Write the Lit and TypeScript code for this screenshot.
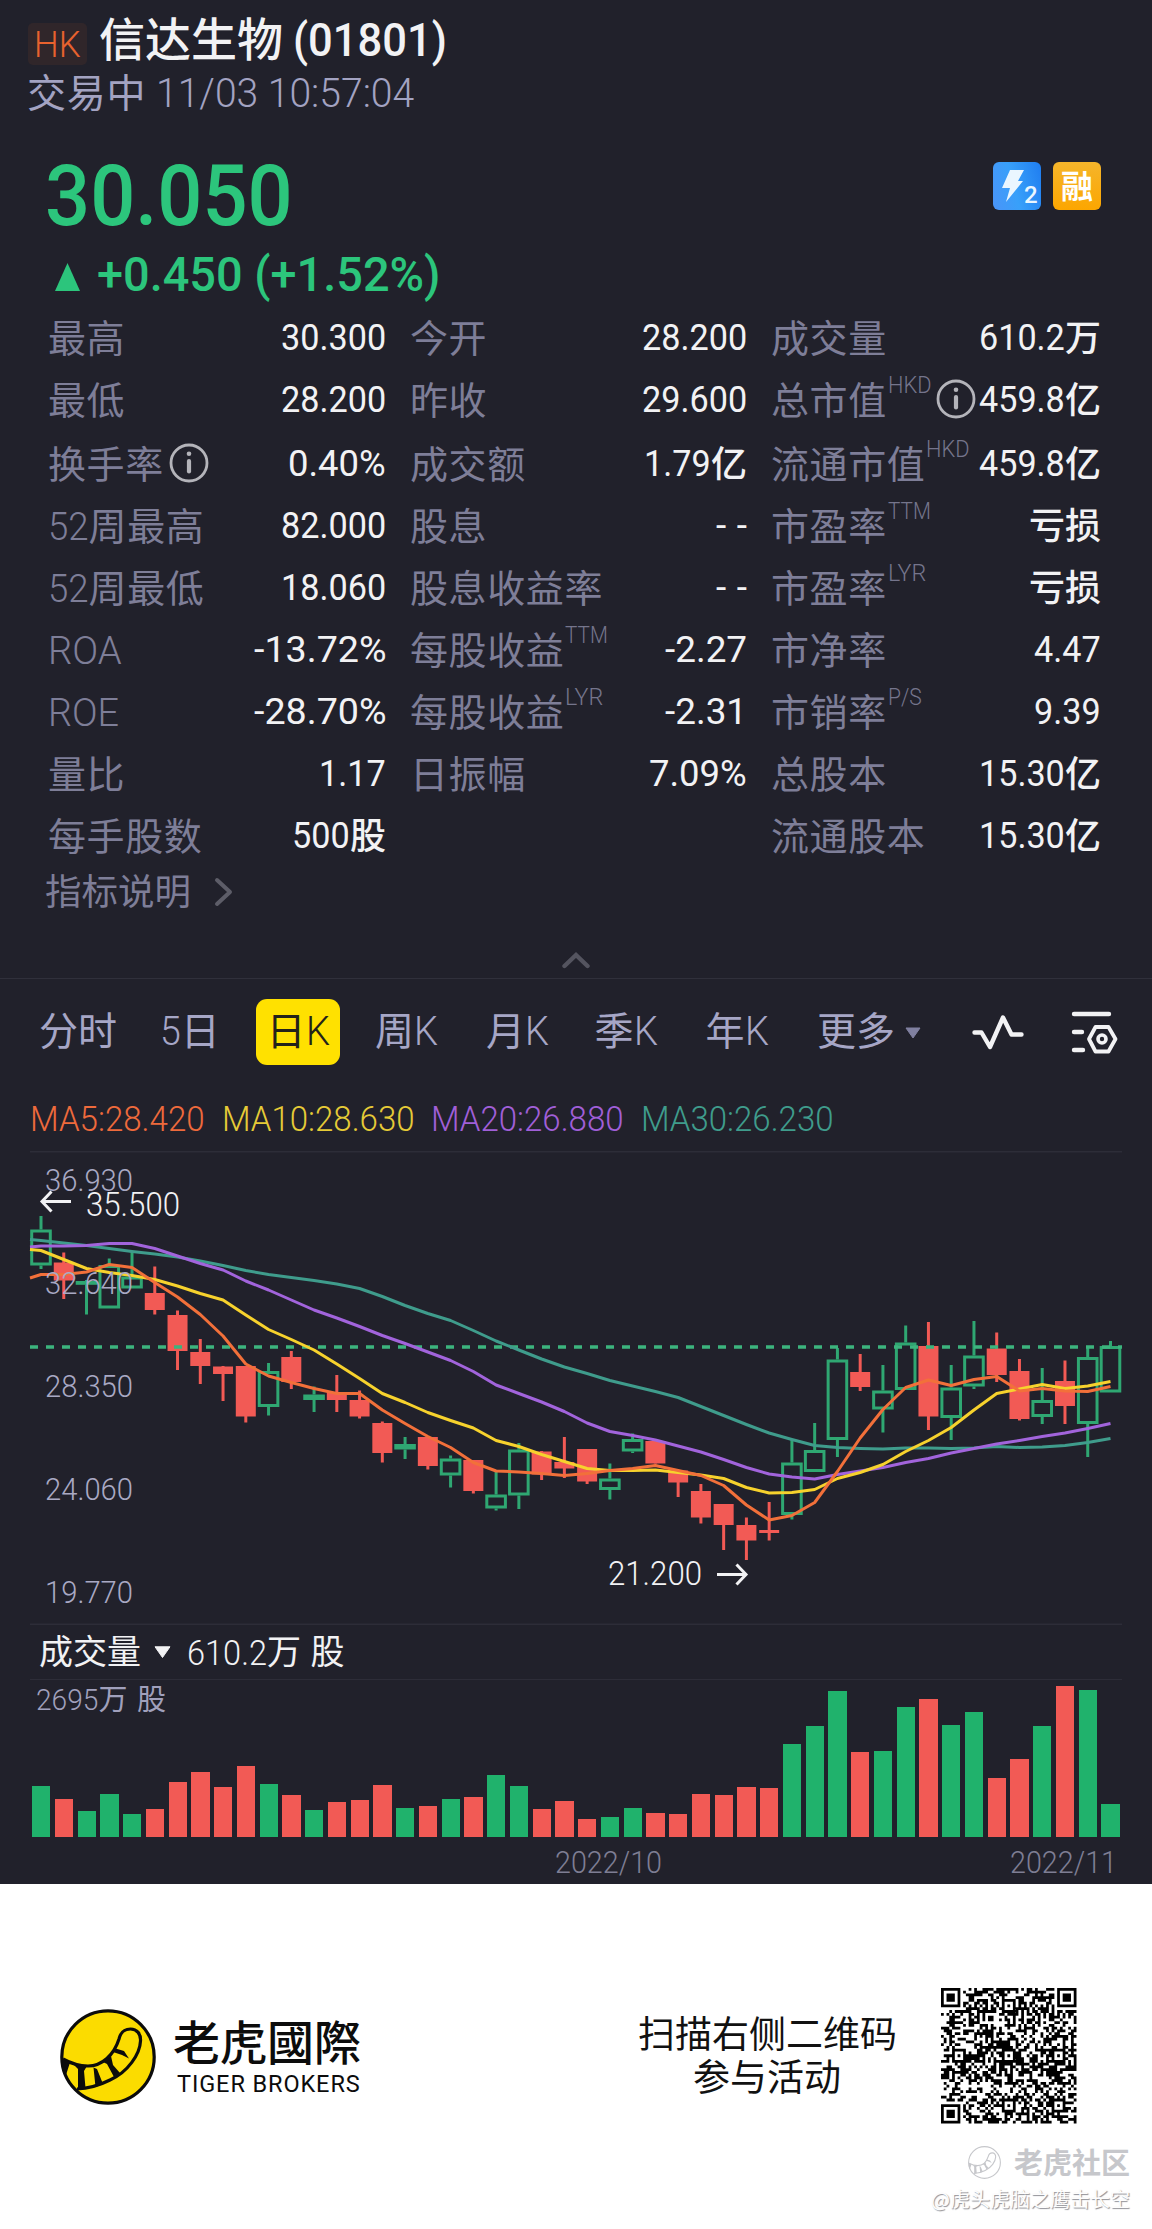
import { LitElement, html, svg, css, nothing } from 'lit';
import { customElement } from 'lit/decorators.js';

type Cell = { label: string; value: string; sup?: string; info?: boolean };

const ROWS: (Cell | null)[][] = [
  [{ label: '最高', value: '30.300' }, { label: '今开', value: '28.200' }, { label: '成交量', value: '610.2万' }],
  [{ label: '最低', value: '28.200' }, { label: '昨收', value: '29.600' }, { label: '总市值', sup: 'HKD', info: true, value: '459.8亿' }],
  [{ label: '换手率', info: true, value: '0.40%' }, { label: '成交额', value: '1.79亿' }, { label: '流通市值', sup: 'HKD', value: '459.8亿' }],
  [{ label: '52周最高', value: '82.000' }, { label: '股息', value: '--' }, { label: '市盈率', sup: 'TTM', value: '亏损' }],
  [{ label: '52周最低', value: '18.060' }, { label: '股息收益率', value: '--' }, { label: '市盈率', sup: 'LYR', value: '亏损' }],
  [{ label: 'ROA', value: '-13.72%' }, { label: '每股收益', sup: 'TTM', value: '-2.27' }, { label: '市净率', value: '4.47' }],
  [{ label: 'ROE', value: '-28.70%' }, { label: '每股收益', sup: 'LYR', value: '-2.31' }, { label: '市销率', sup: 'P/S', value: '9.39' }],
  [{ label: '量比', value: '1.17' }, { label: '日振幅', value: '7.09%' }, { label: '总股本', value: '15.30亿' }],
  [{ label: '每手股数', value: '500股' }, null, { label: '流通股本', value: '15.30亿' }],
];

// high, body top, body bottom, low (chart units), 1 = up
const CANDLES: number[][] = [
  [1216, 1229.5, 1265.5, 1269, 1], [1252.5, 1262.5, 1280.5, 1299, 0], [1280, 1281, 1284.5, 1314.5, 1],
  [1258.5, 1265, 1308.5, 1308.5, 1], [1251.5, 1276.5, 1288.5, 1288.5, 1], [1266.5, 1293, 1310, 1314.5, 0],
  [1310.5, 1315, 1351, 1370, 0], [1339, 1352, 1366, 1384, 0], [1366, 1366.5, 1374, 1401, 0],
  [1366, 1366, 1416.5, 1422.5, 0], [1363, 1371, 1407, 1415.5, 1], [1351, 1357, 1382, 1389, 0],
  [1386.5, 1394.5, 1400, 1412, 1], [1375, 1392.5, 1400, 1412, 0], [1390.5, 1400, 1416.5, 1418.5, 0],
  [1421.5, 1423, 1453, 1462.5, 0], [1437, 1444, 1449.5, 1459, 1], [1437, 1437, 1466, 1469.5, 0],
  [1455.5, 1458.5, 1475.5, 1487.5, 1], [1460, 1460, 1491, 1493.5, 0], [1471.5, 1494.5, 1508.5, 1510.5, 1],
  [1443, 1449.5, 1495.5, 1509, 1], [1451, 1451.5, 1474.5, 1480, 0], [1437, 1462, 1468.5, 1478, 0],
  [1449, 1449, 1481.5, 1484, 0], [1463.5, 1478.5, 1490, 1499.5, 1], [1433.5, 1439, 1451.5, 1453, 1],
  [1440, 1441, 1463.5, 1463.5, 0], [1470.5, 1470.5, 1482.5, 1497, 0], [1484, 1491, 1517.5, 1523.5, 0],
  [1504, 1504, 1525, 1550, 0], [1517.5, 1525, 1540.5, 1560, 0], [1502, 1530, 1533, 1540.5, 0],
  [1439.5, 1462.5, 1515, 1519.5, 1], [1423, 1450, 1472, 1472, 1], [1348, 1359.5, 1440, 1457, 1],
  [1354, 1372, 1387, 1391, 0], [1365, 1390.5, 1409.5, 1432.5, 1], [1325.5, 1342.5, 1390, 1390, 1],
  [1322, 1346, 1416.5, 1430, 0], [1365, 1387.5, 1418, 1440, 1], [1321, 1355.5, 1386.5, 1389, 1],
  [1332.5, 1348.5, 1375, 1382, 0], [1359, 1371, 1419, 1420.5, 0], [1368, 1400, 1417, 1424, 1],
  [1360.5, 1381, 1406, 1424, 0], [1348, 1357, 1424, 1457, 1], [1341, 1346, 1392.5, 1392.5, 1],
];

// the first value of each line sits on the left edge of the plot
const MA: { name: string; value: string; cls: string; points: number[] }[] = [
  {
    name: 'MA5', value: '28.420', cls: 'ma5',
    points: [1278, 1274.5, 1274.5, 1272, 1264.5, 1267.5, 1282.5, 1297, 1314.5, 1336, 1364, 1376, 1382.5, 1388.5, 1393.5, 1393.5, 1410, 1423.5, 1436.5, 1447.5, 1462.5, 1471, 1472, 1473.5, 1475.5, 1473.5, 1470.5, 1468.5, 1465.5, 1470.5, 1475.5, 1485.5, 1505, 1520, 1515.5, 1502.5, 1471.5, 1438, 1409.5, 1387.5, 1380, 1385.5, 1379.5, 1376.5, 1391, 1388.5, 1391, 1391.5, 1386.5],
  },
  {
    name: 'MA10', value: '28.630', cls: 'ma10',
    points: [1249.5, 1250.5, 1259.5, 1268.5, 1272.5, 1275.5, 1279.5, 1286, 1293.5, 1300, 1315, 1329.5, 1339.5, 1350, 1364, 1378.5, 1393.5, 1402.5, 1412.5, 1420.5, 1428, 1440.5, 1446.5, 1454.5, 1461.5, 1468.5, 1470.5, 1470.5, 1470, 1472.5, 1475, 1478.5, 1487.5, 1493, 1492.5, 1489.5, 1478.5, 1472.5, 1464.5, 1451.5, 1440.5, 1427.5, 1410, 1393.5, 1389, 1384.5, 1388.5, 1386, 1381.5],
  },
  {
    name: 'MA20', value: '26.880', cls: 'ma20',
    points: [1247, 1246, 1246, 1245.5, 1243.5, 1243.5, 1248.5, 1256, 1263.5, 1270, 1281, 1290, 1300, 1310, 1318, 1326.5, 1335.5, 1343.5, 1352, 1360.5, 1371.5, 1385, 1393.5, 1402, 1411.5, 1423, 1431.5, 1435.5, 1440, 1446, 1452, 1459.5, 1467.5, 1474, 1477, 1479, 1474.5, 1471, 1467.5, 1462.5, 1458.5, 1453, 1448.5, 1444, 1440.5, 1436.5, 1433, 1428.5, 1423.5],
  },
  {
    name: 'MA30', value: '26.230', cls: 'ma30',
    points: [1239.5, 1240.5, 1243, 1245.5, 1248.5, 1251.5, 1254, 1257, 1261, 1265.5, 1270.5, 1274.5, 1277.5, 1280.5, 1284, 1288.5, 1296.5, 1305.5, 1313.5, 1320.5, 1330.5, 1341, 1350, 1359, 1367, 1373.5, 1380.5, 1386, 1391.5, 1397.5, 1406.5, 1415.5, 1424.5, 1433, 1439.5, 1445.5, 1447.5, 1448.5, 1449, 1448, 1448, 1448.5, 1448, 1446.5, 1447.5, 1447, 1445.5, 1442.5, 1438.5],
  },
];

const VOLUME = [
  152, 113, 79, 128, 70, 83, 164, 196, 150, 212, 158, 127, 81, 106, 110, 155, 88, 92, 113, 119, 185, 153, 83, 109,
  53, 59, 86, 72, 70, 128, 125, 151, 148, 280, 332, 438, 254, 259, 389, 415, 337, 376, 178, 234, 332, 452, 442, 100,
];

const cx = (i: number) => 41 + i * 22.755;

// advance widths (em) of the condensed latin face, digits are 0.52
const ADVANCE: Record<string, number> = {
  '.': 0.24, ':': 0.27, ' ': 0.29, '-': 0.42, '+': 0.54, '%': 0.84, '/': 0.33, '(': 0.34, ')': 0.34,
  M: 0.8, A: 0.63, H: 0.66, K: 0.6, D: 0.63, T: 0.53, R: 0.6, O: 0.66, E: 0.56, L: 0.51, Y: 0.55, P: 0.58, S: 0.56,
};

// A condensed latin run. The svg is exactly one cap height tall, so it stands on the text baseline.
function num(text: string, size: number, scale = 1) {
  const width = [...text].reduce((w, ch) => w + (ADVANCE[ch] ?? 0.52) * size * scale, 0).toFixed(1);
  const height = (size * 0.711).toFixed(1);
  const adjust = text === '--' ? 'spacing' : 'spacingAndGlyphs';
  return html`<svg class="num" width=${width} height=${height} font-size=${size}><text y=${height} textLength=${width} lengthAdjust=${adjust}>${text}</text></svg>`;
}

// Splits a string in latin and Chinese runs
function mixed(text: string, size: number, scale = 1) {
  const runs = text.match(/[\x21-\x7e]+|[^\x21-\x7e]+/g) ?? [];
  return runs.map((r) => (/[\x21-\x7e]/.test(r) ? num(r, size, scale) : r));
}

const numStyles = css`
  .num {
    display: inline-block;
    flex: none;
    overflow: visible;
    fill: currentColor;
    font-family: Roboto, sans-serif;
    letter-spacing: 0;
    word-spacing: 0;
    white-space: pre;
  }
`;

const ALIGN = [6, 24, 42];
const QR_SIZE = 49;

function qrModule(x: number, y: number, seed: number): boolean {
  for (const [fx, fy] of [[3, 3], [45, 3], [3, 45]]) {
    const d = Math.max(Math.abs(x - fx), Math.abs(y - fy));
    if (d <= 4) return d !== 2 && d !== 4;
  }
  for (const ax of ALIGN) {
    for (const ay of ALIGN) {
      if ((ax === 6 && ay !== 24) || (ay === 6 && ax !== 24)) continue;
      const d = Math.max(Math.abs(x - ax), Math.abs(y - ay));
      if (d <= 2) return d !== 1;
    }
  }
  if (x === 6 || y === 6) return (x + y) % 2 === 0;
  return seed > 0.49;
}

function qrPath(): string {
  let d = '';
  let s = 1801;
  for (let y = 0; y < QR_SIZE; y++) {
    for (let x = 0; x < QR_SIZE; x++) {
      s = (s * 16807) % 2147483647;
      if (qrModule(x, y, s / 2147483647)) d += `M${x} ${y}h1v1h-1z`;
    }
  }
  return d;
}

@customElement('info-icon')
export class InfoIcon extends LitElement {
  static styles = css`
    :host {
      display: block;
      flex: none;
      width: 40px;
      height: 40px;
    }
    svg {
      display: block;
    }
  `;

  render() {
    return html`
      <svg width="40" height="40" viewBox="0 0 40 40" fill="none" stroke="#b4b4ba">
        <circle cx="20" cy="20" r="18" stroke-width="2.8" />
        <circle cx="20" cy="10.8" r="2.3" fill="#b4b4ba" stroke="none" />
        <path d="M20 18V28.500" stroke-width="4.2" stroke-linecap="round" />
      </svg>
    `;
  }
}

@customElement('quote-stats')
export class QuoteStats extends LitElement {
  static styles = [
    numStyles,
    css`
      :host {
        display: block;
        padding: 0 51px 0 48px;
      }
      .row {
        display: grid;
        grid-template-columns: 338px 337px 330px;
        column-gap: 24px;
        height: 62px;
      }
      .row:nth-child(3) {
        padding-top: 2px;
      }
      .cell {
        display: flex;
        align-items: center;
        height: 62px;
        line-height: 61px;
        white-space: nowrap;
      }
      .label {
        font-size: 38px;
        letter-spacing: 0.6px;
        color: #7e7e98;
      }
      .label .num {
        font-weight: 300;
      }
      .sup {
        display: flex;
        color: #75758c;
        margin: -23px 0 0 1px;
        font-weight: 300;
      }
      .value {
        font-size: 36px;
        color: #f2f2f4;
        margin-left: auto;
        font-weight: 500;
      }
      .value .num {
        font-weight: 400;
      }
      info-icon {
        margin: 4px 0 0 5px;
      }
      .sup + info-icon {
        margin-right: -3px;
      }
    `,
  ];

  render() {
    return ROWS.map(
      (row) => html`
        <div class="row">
          ${row.map((c) =>
            c
              ? html`<div class="cell">
                  <span class="label">${mixed(c.label, 39)}</span>
                  ${c.sup ? html`<span class="sup">${num(c.sup, 23)}</span>` : nothing}
                  ${c.info ? html`<info-icon></info-icon>` : nothing}
                  <span class="value">${mixed(c.value, 37)}</span>
                </div>`
              : html`<div></div>`
          )}
        </div>
      `
    );
  }
}

@customElement('kline-chart')
export class KlineChart extends LitElement {
  static styles = css`
    :host {
      display: block;
      font-family: Roboto, sans-serif;
    }
    svg {
      display: block;
    }
    .grid {
      stroke: #2d2d38;
      stroke-width: 1.5;
    }
    .up {
      fill: none;
      stroke: #2fa772;
      stroke-width: 3;
    }
    .down {
      fill: #f25a55;
      stroke: none;
    }
    .wick-up {
      stroke: #2fa772;
      stroke-width: 3;
    }
    .wick-down {
      stroke: #f25a55;
      stroke-width: 3;
    }
    .line {
      fill: none;
      stroke-width: 3;
      stroke-linejoin: round;
    }
    .ma5 {
      stroke: #f2703a;
    }
    .ma10 {
      stroke: #f7d22d;
    }
    .ma20 {
      stroke: #a264dc;
    }
    .ma30 {
      stroke: #3f9c8c;
    }
    .last {
      stroke: #3cb47e;
      stroke-width: 3.4;
      stroke-dasharray: 8 8;
    }
    .axis {
      font-size: 31px;
      font-weight: 300;
      fill: #a9a9c4;
    }
    .mark {
      font-size: 33px;
      fill: #f2f2f4;
      font-weight: 300;
    }
    .arrow {
      fill: none;
      stroke: #f2f2f4;
      stroke-width: 3;
    }
  `;

  candle([high, top, bottom, low, up]: number[], i: number) {
    const x = cx(i);
    if (up) {
      return svg`
        <path class="wick-up" d="M${x} ${high}V${top}M${x} ${bottom}V${low}" />
        <rect class="up" x=${x - 9.3} y=${top + 1.5} width="18.6" height=${Math.max(bottom - top - 3, 0.8)} />
      `;
    }
    return svg`
      <path class="wick-down" d="M${x} ${high}V${low}" />
      <rect class="down" x=${x - 10} y=${top} width="20" height=${bottom - top} />
    `;
  }

  line(points: number[]) {
    return points.map((y, i) => `${i === 0 ? 30 : cx(i - 1)},${y}`).join(' ');
  }

  render() {
    return html`
      <svg width="1152" height="474" viewBox="0 1151 1152 474">
        <path class="grid" d="M30 1151.7H1122M30 1624.3H1122" />
        ${CANDLES.map((c, i) => this.candle(c, i))}
        <path class="last" d="M30 1347H1122" />
        ${[...MA].reverse().map((m) => svg`<polyline class="line ${m.cls}" points=${this.line(m.points)} />`)}
        ${['36.930', '32.640', '28.350', '24.060', '19.770'].map(
          (t, i) => svg`<text class="axis" x="45" y=${1191 + i * 103} textLength="88" lengthAdjust="spacingAndGlyphs">${t}</text>`
        )}
        <text class="mark" x="86" y="1216" textLength="94" lengthAdjust="spacingAndGlyphs">35.500</text>
        <path class="arrow" d="M71 1201.5H42M51.5 1191.5L42 1201.5L51.5 1211.5" />
        <text class="mark" x="608" y="1584.5" textLength="94" lengthAdjust="spacingAndGlyphs">21.200</text>
        <path class="arrow" d="M717 1574.5H746M736.5 1564.5L746 1574.5L736.5 1584.5" />
      </svg>
    `;
  }
}

@customElement('volume-chart')
export class VolumeChart extends LitElement {
  static styles = [
    numStyles,
    css`
      :host {
        display: block;
      }
      .head {
        display: flex;
        align-items: center;
        height: 55px;
        line-height: 49px;
        margin: 0 30px;
        padding: 0 0 5px 9px;
        border-bottom: 1px solid #2d2d38;
        color: #f2f2f4;
        font-size: 34px;
        box-sizing: border-box;
        white-space: pre;
        word-spacing: 2px;
      }
      .arrow {
        margin: 4px 16px 0 13px;
      }
      .plot {
        height: 157px;
      }
      .max {
        font-size: 29px;
        line-height: 35px;
        color: #a0a0bc;
        padding-left: 36px;
        height: 0;
        word-spacing: 3px;
      }
      .num {
        font-weight: 300;
      }
      .bars {
        display: flex;
        align-items: flex-end;
        justify-content: space-between;
        height: 157px;
        padding: 0 32px;
      }
      .bar {
        width: 18.4px;
        background: #f25a55;
      }
      .bar.up {
        background: #20b26c;
      }
      .dates {
        display: block;
        font-family: Roboto, sans-serif;
        font-size: 31px;
        font-weight: 300;
        fill: #7e7e94;
      }
    `,
  ];

  render() {
    return html`
      <div class="head"><span>成交量</span><svg class="arrow" width="17" height="12" viewBox="0 0 17 12"><path d="M1 .8h15L8.500 11.5z" fill="#f2f2f4" stroke="#f2f2f4" stroke-linejoin="round" /></svg><span>${mixed('610.2万 股', 34.5)}</span></div>
      <div class="plot">
        <div class="max">${mixed('2695万 股', 30)}</div>
        <div class="bars">
          ${VOLUME.map((v, i) => html`<div class="bar ${CANDLES[i][4] ? 'up' : ''}" style="height:${v / 3}px"></div>`)}
        </div>
      </div>
      <svg class="dates" width="1152" height="47">
        <text x="555" y="36" textLength="107" lengthAdjust="spacingAndGlyphs">2022/10</text>
        <text x="1010" y="36" textLength="107" lengthAdjust="spacingAndGlyphs">2022/11</text>
      </svg>
    `;
  }
}

@customElement('app-root')
export class AppRoot extends LitElement {
  static styles = [
    css`
      svg {
        display: block;
      }
    `,
    numStyles,
    css`
      :host {
        display: block;
        width: 1152px;
        height: 2229px;
        overflow: hidden;
        background: #fff;
        font-family: 'Noto Sans CJK SC', sans-serif;
      }
      .dark {
        height: 1884px;
        background: #21212b;
      }
      .title {
        display: flex;
        align-items: center;
        height: 66px;
        padding: 7px 0 0 28px;
        box-sizing: border-box;
        color: #f2f2f4;
        font-size: 46px;
        line-height: 59px;
        font-weight: 500;
        white-space: pre;
      }
      .market {
        display: flex;
        align-items: center;
        justify-content: center;
        width: 59px;
        height: 42px;
        padding-top: 2px;
        box-sizing: border-box;
        margin: 14px 12px 0 0;
        border-radius: 5px;
        background: #30262a;
        color: #e8622e;
        font-weight: 300;
      }
      .status {
        height: 50px;
        line-height: 48px;
        padding-left: 27px;
        font-size: 39px;
        letter-spacing: 0.8px;
        color: #a3a3c2;
        white-space: pre;
      }
      .status .num {
        font-weight: 300;
      }
      .quote {
        display: flex;
        justify-content: space-between;
        align-items: flex-start;
        height: 118px;
        padding: 46px 51px 0 45px;
        box-sizing: border-box;
        color: #2cc57c;
        font-weight: 500;
      }
      .quote > .num {
        margin-top: 2px;
      }
      .tags {
        display: flex;
        gap: 12px;
      }
      .tag {
        width: 48px;
        height: 48px;
        border-radius: 6px;
        color: #fff;
        text-align: center;
        line-height: 45px;
        font-size: 32px;
        font-weight: 700;
      }
      .level {
        background: linear-gradient(75deg, #4a94f8, #38a0fa 45%, #1f7df0);
      }
      .level text {
        font: 500 24px Roboto, sans-serif;
      }
      .margin {
        background: linear-gradient(180deg, #f5b52b, #fca600);
      }
      .change {
        display: flex;
        align-items: flex-end;
        gap: 17px;
        height: 57px;
        padding-left: 55px;
        font-weight: 500;
        color: #2cc57c;
      }
      quote-stats {
        margin-top: 13px;
      }
      .explain {
        display: flex;
        align-items: center;
        gap: 23px;
        height: 52px;
        line-height: 52px;
        padding-left: 45px;
        color: #7e7e98;
        font-size: 36.5px;
      }
      .explain svg {
        margin-top: 4px;
      }
      .collapse {
        display: flex;
        justify-content: center;
        align-items: flex-end;
        height: 63px;
        padding-bottom: 9px;
        box-sizing: border-box;
        border-bottom: 1px solid #30303b;
      }
      .tabs {
        display: grid;
        grid-template-columns: 121px 95px 120px 111px 108.5px 111px 111.5px 155px 99px 47px;
        align-items: center;
        height: 106px;
        padding-left: 39px;
        color: #a6a6c6;
        font-size: 39px;
        line-height: 59px;
        white-space: nowrap;
      }
      .tabs .num {
        font-weight: 300;
      }
      .tab {
        height: 66px;
      }
      .active {
        width: 84px;
        height: 66px;
        margin-left: 1px;
        border-radius: 11px;
        background: #ffe100;
        color: #23221a;
        text-align: center;
      }
      .more {
        display: flex;
        gap: 10px;
        height: 66px;
      }
      .more svg {
        margin-top: 28px;
      }
      .legend {
        display: flex;
        align-items: flex-end;
        gap: 17px;
        height: 66px;
        padding: 0 0 21px 30px;
        box-sizing: border-box;
        font-weight: 300;
      }
      .legend span {
        display: flex;
      }
      .ma5 {
        color: #ee6a3c;
      }
      .ma10 {
        color: #e6cb37;
      }
      .ma20 {
        color: #a05fd8;
      }
      .ma30 {
        color: #3f9c8c;
      }
      .footer {
        display: grid;
        grid-template-columns: 113px 465px 258px 181px;
        height: 240px;
        padding: 104px 0 0 60px;
        box-sizing: border-box;
      }
      .logo {
        padding-top: 21px;
      }
      .brand {
        padding-top: 22px;
        color: #0c0c0c;
      }
      .brand-cn {
        font-family: 'Noto Sans CJK TC', sans-serif;
        font-size: 47px;
        font-weight: 500;
        line-height: 60px;
      }
      .brand-en {
        padding-left: 4px;
        font-family: Roboto, sans-serif;
        font-size: 23.5px;
        letter-spacing: 0.9px;
        line-height: 29px;
      }
      .scan {
        padding-top: 23px;
        font-size: 37px;
        line-height: 43px;
        text-align: center;
        color: #111;
        white-space: nowrap;
      }
      .qr {
        margin-left: 45px;
      }
      .mark {
        display: flex;
        flex-direction: column;
        align-items: flex-end;
        padding: 19px 22px 0 0;
      }
      .community {
        display: flex;
        align-items: center;
        gap: 13px;
        height: 38px;
        line-height: 38px;
        color: #c6c7cb;
        font-size: 29px;
        font-weight: 700;
      }
      .community span {
        margin-top: -3px;
      }
      .author {
        color: #fdfdfd;
        font-size: 20px;
        line-height: 28px;
        margin-top: 4px;
        text-shadow: 1px 1px 1px #8e8e94;
      }
    `,
  ];

  smile(size: number, line: string, fill: string) {
    return html`
      <svg width=${size} height=${size} viewBox="0 0 96 96">
        <circle cx="48" cy="48" r="46.2" fill=${fill} stroke=${line} stroke-width="3.2" />
        <path d="M3 50C12 55 19 57 28 57C42 57 54 46 59 30C61 22 65 20 70.500 20C77 20 81 25 80.500 32C80 45 68 63 50 71C40 76 29 79.500 17 80" fill="none" stroke=${line} stroke-width="3.2" />
        <path d="M2 49L10 53.500L6 66L3 64zM14 56L27 57L24 62L25.500 79L18 80L18 60zM33.500 58.500L37 60L43 75L35.500 78zM43 53L51 47L53 56L60 64L54 68L47 55zM54 39L64 42L69 49.500L62 46L53 43z" fill=${line} />
      </svg>
    `;
  }

  render() {
    return html`
      <div class="dark">
        <div class="title"><span class="market">${num('HK', 37)}</span><span>${mixed('信达生物 (01801)', 46, 1.02)}</span></div>
        <div class="status">${mixed('交易中 ', 40)}${num('11/03 10:57:04', 40, 1.015)}</div>
        <div class="quote">
          ${num('30.050', 85.5, 1.02)}
          <div class="tags">
            <div class="tag level">
              <svg width="48" height="48" viewBox="0 0 48 48">
                <path d="M17 8h14l-6 11h5L13 40l4-14H9z" fill="#eaf6ff" />
                <text x="31" y="41" fill="#eaf6ff">2</text>
              </svg>
            </div>
            <div class="tag margin">融</div>
          </div>
        </div>
        <div class="change">
          <svg width="25" height="28" viewBox="0 0 25 28"><path d="M12.500 0L25 28H0z" fill="#2cc57c" /></svg>
          ${num('+0.450 (+1.52%)', 49)}
        </div>
        <quote-stats></quote-stats>
        <div class="explain">
          指标说明
          <svg width="20" height="30" viewBox="0 0 20 30" fill="none" stroke="#5d5d68" stroke-width="4" stroke-linecap="round" stroke-linejoin="round"><path d="M3 3l13 12L3 27" /></svg>
        </div>
        <div class="collapse">
          <svg width="30" height="18" viewBox="0 0 30 18" fill="none" stroke="#54545f" stroke-width="4.400" stroke-linecap="round"><path d="M3.500 15L15 4l11.500 11" /></svg>
        </div>
        <div class="tabs">
          <span class="tab">分时</span>
          <span class="tab">${mixed('5日', 40)}</span>
          <span class="active">${mixed('日K', 40)}</span>
          <span class="tab">${mixed('周K', 40)}</span>
          <span class="tab">${mixed('月K', 40)}</span>
          <span class="tab">${mixed('季K', 40)}</span>
          <span class="tab">${mixed('年K', 40)}</span>
          <span class="more">更多<svg width="16" height="12" viewBox="0 0 16 12"><path d="M1 1h14L8 11z" fill="#8080a0" stroke="#8080a0" stroke-linejoin="round" /></svg></span>
          <svg width="52" height="36" viewBox="0 0 52 36" fill="none" stroke="#f2f2f4" stroke-width="4.400" stroke-linecap="round" stroke-linejoin="round"><path d="M2.500 18.500H9.500L18 33L31 3.500L39.500 20.500H49.500" /></svg>
          <svg width="47" height="43" viewBox="0 0 47 43" fill="none" stroke="#f2f2f4" stroke-width="4.400" stroke-linecap="round" stroke-linejoin="round">
            <path d="M3 3h35M3 21h8M3 39h9" />
            <path d="M24.500 16h13L44.500 28l-7 12.500h-13L18 28z" stroke-width="3.800" />
            <circle cx="31" cy="28" r="4" stroke-width="3.600" />
          </svg>
        </div>
        <div class="legend">${MA.map((m) => html`<span class=${m.cls}>${num(`${m.name}:${m.value}`, 34.5)}</span>`)}</div>
        <kline-chart></kline-chart>
        <volume-chart></volume-chart>
      </div>
      <div class="footer">
        <div class="logo">${this.smile(96, '#0c0c0c', '#fbdc00')}</div>
        <div class="brand">
          <div class="brand-cn">老虎國際</div>
          <div class="brand-en">TIGER BROKERS</div>
        </div>
        <div class="scan">扫描右侧二维码<br />参与活动</div>
        <svg class="qr" width="135.500" height="135.500" viewBox="0 0 49 49"><path d=${qrPath()} fill="#000" /></svg>
      </div>
      <div class="mark">
        <div class="community">${this.smile(33, '#c6c7cb', 'none')}<span>老虎社区</span></div>
        <div class="author">@虎头虎脑之鹰击长空</div>
      </div>
    `;
  }
}
